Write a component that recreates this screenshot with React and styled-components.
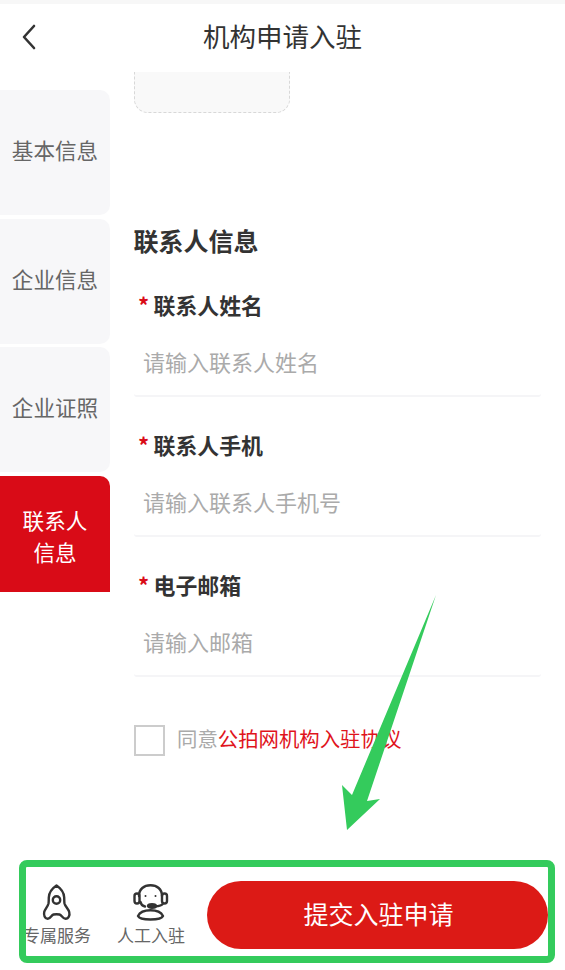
import React from 'react'
import styled, { createGlobalStyle } from 'styled-components'

const GlobalStyle = createGlobalStyle`
    html, body {
        margin: 0;
        background: #fff;
    }

    * {
        box-sizing: border-box;
    }
`

const Page = styled.div`
    position: relative;
    width: 565px;
    height: 970px;
    display: flex;
    flex-direction: column;
    overflow: hidden;
    background: #fff;
    font-family: "Noto Sans CJK SC", "Noto Sans", sans-serif;
`

const TopStrip = styled.div`
    flex: none;
    height: 4px;
    background: #f7f7f7;
`

const Header = styled.header`
    flex: none;
    height: 68px;
    padding-bottom: 6px;
    display: flex;
    align-items: center;
    justify-content: center;
    position: relative;
`

const BackButton = styled.button`
    position: absolute;
    left: 20px;
    top: 19px;
    width: 20px;
    height: 28px;
    padding: 0;
    border: none;
    background: none;
`

const Title = styled.h1`
    margin: 0;
    font-size: 26.5px;
    font-weight: 400;
    color: #333;
`

const Body = styled.div`
    flex: 1;
    min-height: 0;
    display: flex;
    overflow: hidden;
`

const Sidebar = styled.nav`
    flex: none;
    width: 110px;
    padding-top: 18px;
    display: flex;
    flex-direction: column;
`

const Tab = styled.div`
    height: ${props => props.$height}px;
    margin-bottom: ${props => props.$gap}px;
    padding: ${props => (props.$active ? '4px 20px 0' : '0 10px 5px')};
    display: flex;
    align-items: center;
    justify-content: center;
    text-align: center;
    font-size: 21.6px;
    line-height: 32px;
    border-radius: ${props => (props.$active ? '0 10px 0 0' : '0 10px 10px 0')};
    background: ${props => (props.$active ? '#d90b17' : '#f7f7f9')};
    color: ${props => (props.$active ? '#fff' : '#666')};
`

const Main = styled.main`
    flex: 1;
    padding: 0 24px 0 23.5px;
`

const UploadBox = styled.div`
    width: 156.5px;
    height: 101px;
    margin-top: -60px;
    border: 1.5px dashed #d8d8d8;
    border-radius: 14px;
    background: #f9f9f9;
`

const SectionTitle = styled.h2`
    margin: 109px 0 33px;
    font-size: 25px;
    line-height: 36px;
    font-weight: 700;
    color: #333;
`

const Field = styled.div`
    margin-bottom: 34px;
`

const Label = styled.label`
    display: flex;
    align-items: center;
    height: 30px;
    padding: 0 0 4px 4.5px;
    font-size: 21.9px;
    font-weight: 700;
    color: #333;
`

const Star = styled.span`
    width: 15.5px;
    color: #d90b17;
`

const Input = styled.input`
    display: block;
    width: 100%;
    height: 76px;
    padding: 6px 10px 0 9.5px;
    border: none;
    border-bottom: 2px solid #f5f5f7;
    border-radius: 3px;
    outline: none;
    background: none;
    font-family: inherit;
    font-size: 22px;

    &::placeholder {
        color: #aaa;
        opacity: 1;
    }
`

const AgreeRow = styled.div`
    margin-top: 46px;
    display: flex;
    align-items: center;
    font-size: 20.4px;
    color: #aaa;
`

const CheckBox = styled.span`
    flex: none;
    width: 31px;
    height: 31px;
    margin-right: 12.5px;
    border: 2px solid #ccc;
`

const AgreeText = styled.span`
    padding-bottom: 4px;
`

const AgreeLink = styled.span`
    color: #e0141c;
`

const Footer = styled.footer`
    flex: none;
    height: 110px;
    padding: 21px 17px 21px 24px;
    display: flex;
    align-items: stretch;
    position: relative;
`

const ServiceItem = styled.div`
    flex: none;
    width: ${props => props.$width}px;
    display: flex;
    flex-direction: column;
    align-items: center;
    color: #666;
    font-size: 17px;
    line-height: 24px;
    white-space: nowrap;
`

const IconSlot = styled.div`
    height: 42px;
    padding-top: 3px;
    display: flex;
    align-items: flex-start;
`

const ServiceLabel = styled.span`
    display: block;
`

const ItemGap = styled.div`
    flex: none;
    width: 27px;
`

const SubmitButton = styled.button`
    flex: 1;
    margin-left: 22px;
    padding: 0 0 4px 2px;
    border: none;
    border-radius: 34px;
    background: #dc1a16;
    color: #fff;
    font-family: inherit;
    font-size: 25px;
`

const GreenFrame = styled.div`
    position: absolute;
    left: 19px;
    top: 0;
    width: 536px;
    height: 103px;
    border: 7px solid #34cb5c;
    border-radius: 8px;
    pointer-events: none;
`

const ArrowOverlay = styled.svg`
    position: absolute;
    left: 330px;
    top: 590px;
    pointer-events: none;
`

const RocketIcon = () => (
    <svg width="32" height="37" viewBox="-1 -1 32 37" fill="none" stroke="#333" strokeWidth="2.4" strokeLinejoin="round" strokeLinecap="round">
        <path d="M14.500 0.500C10 3.500 7 7.500 6.800 12.500C6.700 15 6.800 17 6.500 18.500C5.800 21.500 3 24 2.200 27C1.600 30 2.600 33.500 5.700 33.800C8.500 34 9.300 30 11.500 29.500C13 29.200 16 29.200 17.500 29.500C19.700 30 20.800 33.800 23.500 33.800C26.800 33.800 28 30 27.200 27C26.400 24 23.200 21.500 22.500 18.500C22.200 17 22.300 15 22.200 12.500C22 7.500 19 3.500 14.500 0.500Z" />
        <circle cx="14.500" cy="15" r="3.700" />
    </svg>
)

const AgentIcon = () => (
    <svg width="36" height="37" viewBox="0 0 36 37" fill="none" stroke="#333" strokeWidth="2.4" strokeLinejoin="round" strokeLinecap="round">
        <path d="M6 12C6 5 11 1.300 17.500 1.300C24 1.300 29 5 29 12" />
        <rect x="1.500" y="9.500" width="5" height="10" rx="2.500" />
        <rect x="29" y="9.500" width="5" height="10" rx="2.500" />
        <path d="M7.500 18C8 20.500 9.500 22 12 22.500" />
        <path d="M30 19.500C29 21.500 26.500 22.300 22 22.300" />
        <ellipse cx="19" cy="22" rx="4" ry="1.800" fill="#333" />
        <path d="M5 32C7 28 11.500 26.300 17.500 26.300C23.500 26.300 28 28 30 32C29 34.500 24 35.500 17.500 35.500C11 35.500 6 34.500 5 32Z" />
        <circle cx="12.500" cy="12" r="1" fill="#333" stroke="none" />
        <circle cx="22.500" cy="12" r="1" fill="#333" stroke="none" />
    </svg>
)

const tabs = [
    { label: '基本信息', height: 125, gap: 3.67 },
    { label: '企业信息', height: 125, gap: 3.67 },
    { label: '企业证照', height: 125, gap: 3.67 },
    { label: '联系人信息', height: 116, gap: 0, active: true },
]

const fields = [
    { label: '联系人姓名', placeholder: '请输入联系人姓名' },
    { label: '联系人手机', placeholder: '请输入联系人手机号' },
    { label: '电子邮箱', placeholder: '请输入邮箱' },
]

const App = () => {
    return (
        <Page>
            <GlobalStyle />
            <TopStrip />
            <Header>
                <BackButton aria-label='back'>
                    <svg width="20" height="28" viewBox="0 0 20 28" fill="none" stroke="#333" strokeWidth="2.6" strokeLinecap="round" strokeLinejoin="round">
                        <path d="M14 3L4 14L14 25" />
                    </svg>
                </BackButton>
                <Title>机构申请入驻</Title>
            </Header>
            <Body>
                <Sidebar>
                    {tabs.map(tab => (
                        <Tab key={tab.label} $height={tab.height} $gap={tab.gap} $active={tab.active}>{tab.label}</Tab>
                    ))}
                </Sidebar>
                <Main>
                    <UploadBox />
                    <SectionTitle>联系人信息</SectionTitle>
                    {fields.map(field => (
                        <Field key={field.label}>
                            <Label><Star>*</Star>{field.label}</Label>
                            <Input placeholder={field.placeholder} />
                        </Field>
                    ))}
                    <AgreeRow>
                        <CheckBox />
                        <AgreeText>同意<AgreeLink>公拍网机构入驻协议</AgreeLink></AgreeText>
                    </AgreeRow>
                </Main>
            </Body>
            <Footer>
                <ServiceItem $width={66}>
                    <IconSlot><RocketIcon /></IconSlot>
                    <ServiceLabel>专属服务</ServiceLabel>
                </ServiceItem>
                <ItemGap />
                <ServiceItem $width={68}>
                    <IconSlot><AgentIcon /></IconSlot>
                    <ServiceLabel>人工入驻</ServiceLabel>
                </ServiceItem>
                <SubmitButton>提交入驻申请</SubmitButton>
                <GreenFrame />
            </Footer>
            <ArrowOverlay width="120" height="250" viewBox="330 590 120 250">
                <path d="M436 595L367 801L380 799L347 830L342 785L352 795Z" fill="#34cb5c" />
            </ArrowOverlay>
        </Page>
    )
}

export default App
